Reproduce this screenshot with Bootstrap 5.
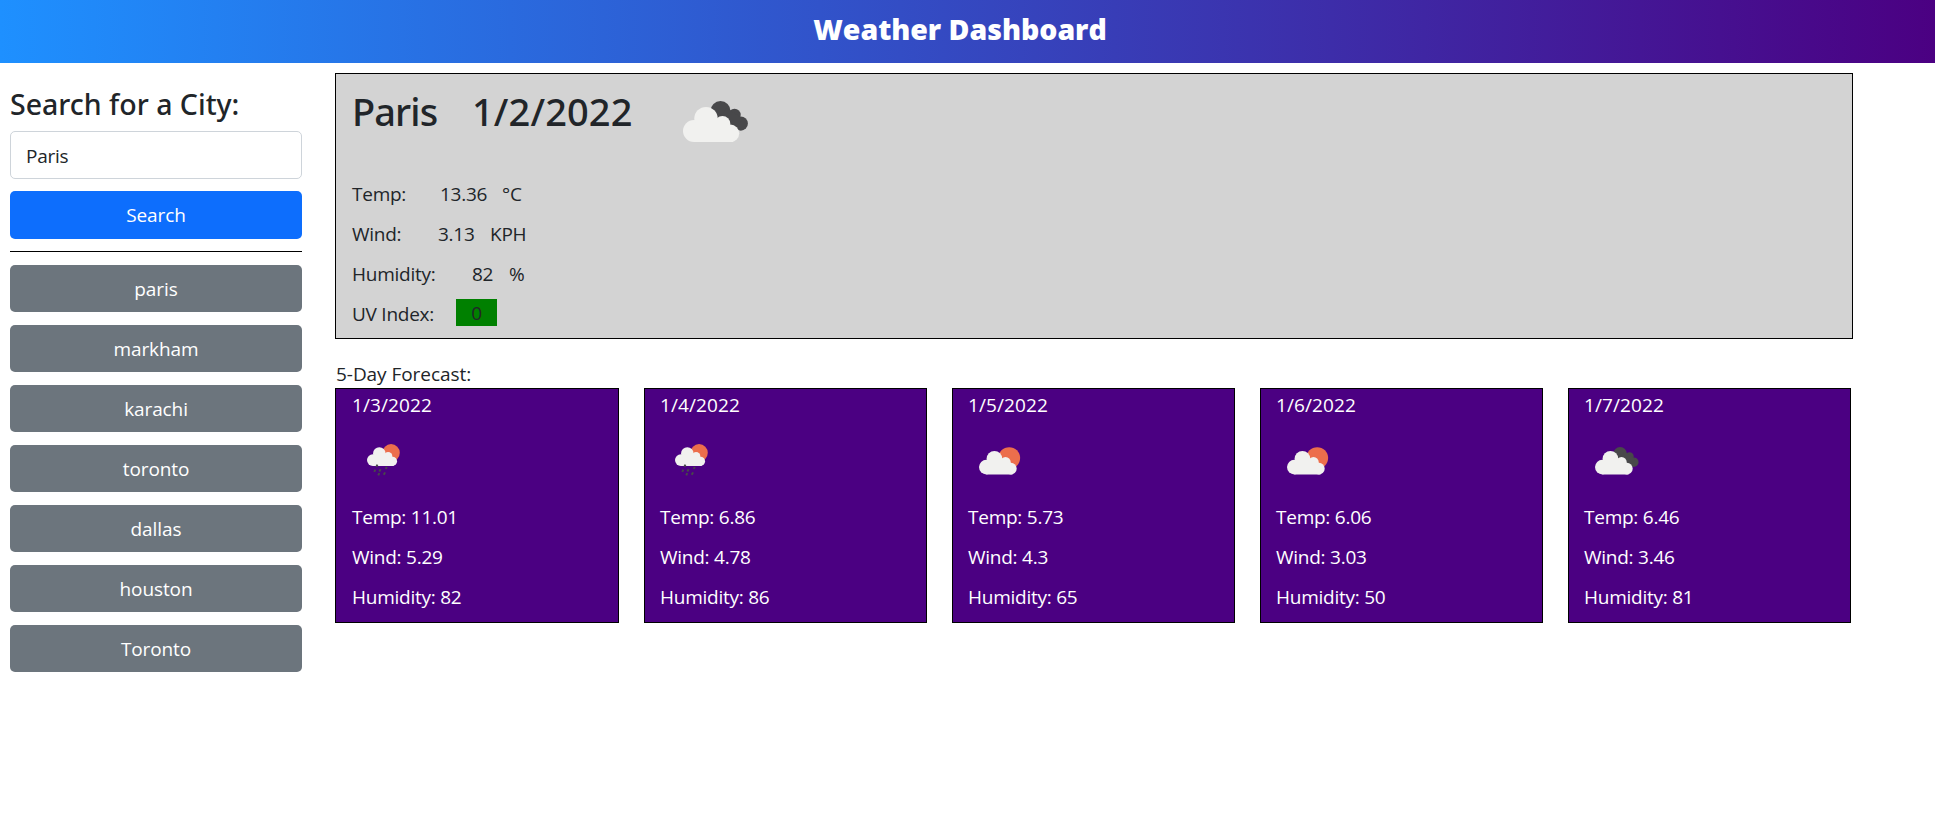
<!DOCTYPE html>
<html lang="en">
<head>
<meta charset="utf-8">
<meta name="viewport" content="width=device-width, initial-scale=1">
<title>Weather Dashboard</title>
<link href="https://cdn.jsdelivr.net/npm/bootstrap@5.3.0/dist/css/bootstrap.min.css" rel="stylesheet">
<style>
  body { font-family: "Open Sans", "Noto Sans", sans-serif; font-size: 19px; line-height: 30px; letter-spacing: -.25px; background: #fff; color: #212529; }
  .topbar { height: 63px; background: linear-gradient(90deg, dodgerblue, indigo); padding: 11px 15px 0 0; }
  .topbar h1 { font-size: 28.5px; line-height: 37px; font-weight: 800; letter-spacing: -.03px; margin: 0; color: #fff; }
  .layout { padding: 10px 82px 0 10px; gap: 33px; }
  .side { width: 292px; flex: none; padding-top: 13px; }
  .side h2 { font-family: "Noto Sans", sans-serif; font-size: 28.5px; line-height: 36px; font-weight: 500; letter-spacing: 0; margin: 0 0 9px; white-space: nowrap; }
  .side .form-control { height: 48px; font-size: 19px; padding: 1px 15px 0; border: 1px solid #ced4da; border-radius: 5px; letter-spacing: inherit; }
  .side .btn { height: 48px; font-size: 19px; padding: 1px 0 0; border: 0; border-radius: 5px; letter-spacing: -.1px; }
  .side .btn-secondary { height: 47px; background: #6c757d; padding-top: 2px; }
  .side .btn-primary { background: #0d6efd; margin-top: 12px; }
  .side hr { margin: 12px 0 13px; border: 0; height: 1px; background: #000; opacity: 1; }
  .history { display: grid; gap: 13px; }
  .today { height: 266px; background: lightgray; border: 1px solid #000; padding: 11px 16px 0; }
  .today h2 { font-family: "Noto Sans", sans-serif; font-size: 38px; line-height: 52px; font-weight: 500; letter-spacing: .1px; margin: 0; }
  .today-head { height: 94px; }
  .today .city-name { width: 120px; letter-spacing: -.9px; }
  .city-date { width: 211px; }
  .pic-today { width: 65px; height: 41px; margin-top: 16px; }
  .reading { display: grid; justify-content: start; height: 30px; margin-bottom: 10px; }
  .reading span { white-space: nowrap; }
  .temp { grid-template-columns: 88px 62px auto; }
  .wind { grid-template-columns: 86px 52px auto; }
  .humid { grid-template-columns: 120px 37px auto; }
  .uvrow { grid-template-columns: 104px 41px; }
  .uv { background: green; height: 27px; line-height: 29px; text-align: center; }
  .forecast-title { margin-top: 19px; line-height: 32px; height: 30px; letter-spacing: -.05px; padding-left: 1px; }
  .forecast { display: grid; grid-template-columns: 284px repeat(4, 283px); column-gap: 25px; }
  .day { height: 235px; background: indigo; border: 1px solid #000; color: #fff; padding: 1px 15px 0 16px; }
  .day + .day { padding-left: 15px; }
  .day p { margin: 0 0 10px; }
  .day .date { letter-spacing: .1px; }
  .pic { display: flex; align-items: flex-start; height: 72px; }
  .pic-cloud { width: 43.600px; height: 27.500px; margin: 17px 0 0 11px; }
  .pic-rain { width: 34.800px; height: 33.200px; margin: 14px 0 0 15px; }
</style>
</head>
<body>
<svg width="0" height="0" class="position-absolute">
  <defs>
    <g id="cloud" fill="#f1f1ef">
      <circle cx="11" cy="30" r="11"/><circle cx="23" cy="17.600" r="11.700"/><circle cx="39.500" cy="22.700" r="7.800"/><circle cx="47.500" cy="32.300" r="8.700"/>
      <path d="M11 22L30 16L42 24L50 30V41H11Z"/>
    </g>
    <g id="clouds">
      <g fill="#48484a"><circle cx="37.500" cy="10" r="10"/><circle cx="51.500" cy="14" r="6.200"/><circle cx="57.800" cy="22.600" r="7.100"/></g>
      <path d="M40 12L56 23" stroke="#48484a" stroke-width="13"/>
      <use href="#cloud"/>
    </g>
    <g id="sun"><circle cx="45" cy="16.500" r="16.300" fill="#ec6e4c"/><use href="#cloud"/></g>
    <g id="rain">
      <use href="#sun"/>
      <path d="M19.500 38.500l-2 4M15.500 48l-2 4M25.500 47l-2.500 4.500M37 43l-2 3.500M23 54.500l-2 4M33.800 53l-2.600 4.500" stroke="#48484a" stroke-width="3.600" fill="none"/>
    </g>
  </defs>
</svg>
<header class="topbar text-center"><h1>Weather Dashboard</h1></header>
<main class="layout d-flex">
  <aside class="side">
    <h2>Search for a City:</h2>
    <input class="form-control" type="text" value="Paris" aria-label="City">
    <button class="btn btn-primary w-100 d-block">Search</button>
    <hr>
    <div class="history">
      <button class="btn btn-secondary">paris</button>
      <button class="btn btn-secondary">markham</button>
      <button class="btn btn-secondary">karachi</button>
      <button class="btn btn-secondary">toronto</button>
      <button class="btn btn-secondary">dallas</button>
      <button class="btn btn-secondary">houston</button>
      <button class="btn btn-secondary">Toronto</button>
    </div>
  </aside>
  <section class="flex-grow-1">
    <div class="today">
      <div class="today-head d-flex">
        <h2 class="city-name">Paris</h2><h2 class="city-date">1/2/2022</h2>
        <svg class="pic-today" viewBox="0 0 65 41"><use href="#clouds"/></svg>
      </div>
      <div class="reading temp"><span>Temp:</span><span>13.36</span><span>°C</span></div>
      <div class="reading wind"><span>Wind:</span><span>3.13</span><span>KPH</span></div>
      <div class="reading humid"><span>Humidity:</span><span>82</span><span>%</span></div>
      <div class="reading uvrow"><span>UV Index:</span><span class="uv">0</span></div>
    </div>
    <div class="forecast-title">5-Day Forecast:</div>
    <div class="forecast">
      <div class="day">
        <p class="date">1/3/2022</p>
        <div class="pic"><svg class="pic-rain" viewBox="0 0 65 62"><use href="#rain"/></svg></div>
        <p>Temp: 11.01</p><p>Wind: 5.29</p><p>Humidity: 82</p>
      </div>
      <div class="day">
        <p class="date">1/4/2022</p>
        <div class="pic"><svg class="pic-rain" viewBox="0 0 65 62"><use href="#rain"/></svg></div>
        <p>Temp: 6.86</p><p>Wind: 4.78</p><p>Humidity: 86</p>
      </div>
      <div class="day">
        <p class="date">1/5/2022</p>
        <div class="pic"><svg class="pic-cloud" viewBox="0 0 65 41"><use href="#sun"/></svg></div>
        <p>Temp: 5.73</p><p>Wind: 4.3</p><p>Humidity: 65</p>
      </div>
      <div class="day">
        <p class="date">1/6/2022</p>
        <div class="pic"><svg class="pic-cloud" viewBox="0 0 65 41"><use href="#sun"/></svg></div>
        <p>Temp: 6.06</p><p>Wind: 3.03</p><p>Humidity: 50</p>
      </div>
      <div class="day">
        <p class="date">1/7/2022</p>
        <div class="pic"><svg class="pic-cloud" viewBox="0 0 65 41"><use href="#clouds"/></svg></div>
        <p>Temp: 6.46</p><p>Wind: 3.46</p><p>Humidity: 81</p>
      </div>
    </div>
  </section>
</main>
<script src="https://cdn.jsdelivr.net/npm/bootstrap@5.3.0/dist/js/bootstrap.bundle.min.js"></script>
</body>
</html>
